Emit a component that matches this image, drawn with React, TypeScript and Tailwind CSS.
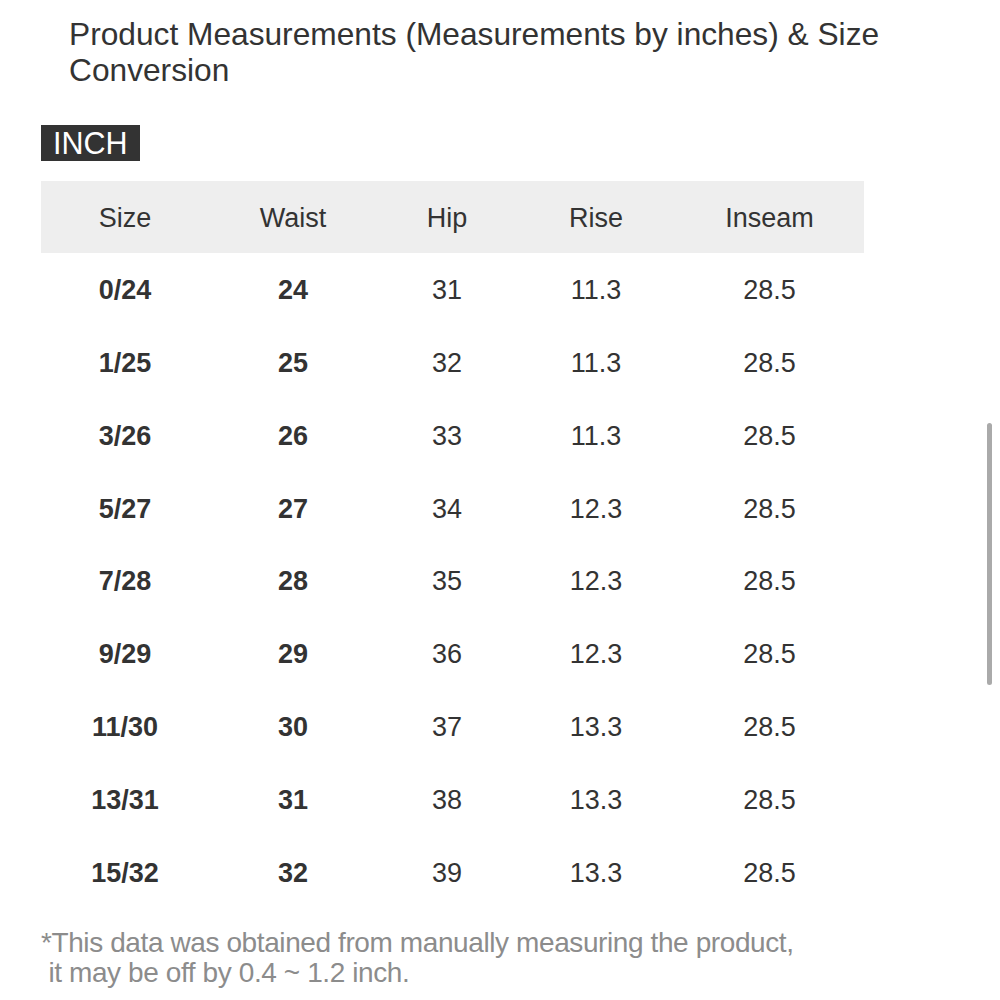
const headers = ["Size", "Waist", "Hip", "Rise", "Inseam"];
const widths = ["w-[168px]", "w-[168px]", "w-[140px]", "w-[158px]", "w-[189px]"];

const rows = [
  ["0/24", "24", "31", "11.3", "28.5"],
  ["1/25", "25", "32", "11.3", "28.5"],
  ["3/26", "26", "33", "11.3", "28.5"],
  ["5/27", "27", "34", "12.3", "28.5"],
  ["7/28", "28", "35", "12.3", "28.5"],
  ["9/29", "29", "36", "12.3", "28.5"],
  ["11/30", "30", "37", "13.3", "28.5"],
  ["13/31", "31", "38", "13.3", "28.5"],
  ["15/32", "32", "39", "13.3", "28.5"],
];

export default function App() {
  return (
    <div className="relative w-[1000px] h-[1000px] bg-white overflow-hidden font-['Liberation_Sans',Arial,sans-serif] text-[#333]">
      <div className="pl-[41px] pt-[16px]">
        <h1 className="ml-[28px] w-[860px] text-[31.7px] leading-[36px] font-normal">
          Product Measurements (Measurements by inches) &amp; Size Conversion
        </h1>

        <div className="mt-[37px] inline-block bg-[#333] text-white text-[30.5px] leading-[36px] px-[12px]">
          INCH
        </div>

        <div className="mt-[20px] w-[823px]">
          <div className="flex h-[72px] bg-[#eeeeee] items-center text-[27px] pt-[2px]">
            {headers.map((h, i) => (
              <div key={h} className={`${widths[i]} text-center`}>
                {h}
              </div>
            ))}
          </div>
          {rows.map((r) => (
            <div key={r[0]} className="flex h-[72.8px] items-center text-[27px] pt-[2px]">
              {r.map((c, i) => (
                <div
                  key={i}
                  className={`${widths[i]} text-center ${i < 2 ? "font-bold" : ""}`}
                >
                  {c}
                </div>
              ))}
            </div>
          ))}
        </div>

        <p className="mt-[20px] text-[28px] leading-[30px] text-[#8c8c8c] tracking-[-0.4px]">
          *This data was obtained from manually measuring the product,
          <br />
          &nbsp;it may be off by 0.4 ~ 1.2 inch.
        </p>
      </div>

      <div className="absolute left-[987px] top-[423px] w-[5px] h-[262px] rounded-full bg-[#aaaaaa]" />
    </div>
  );
}
